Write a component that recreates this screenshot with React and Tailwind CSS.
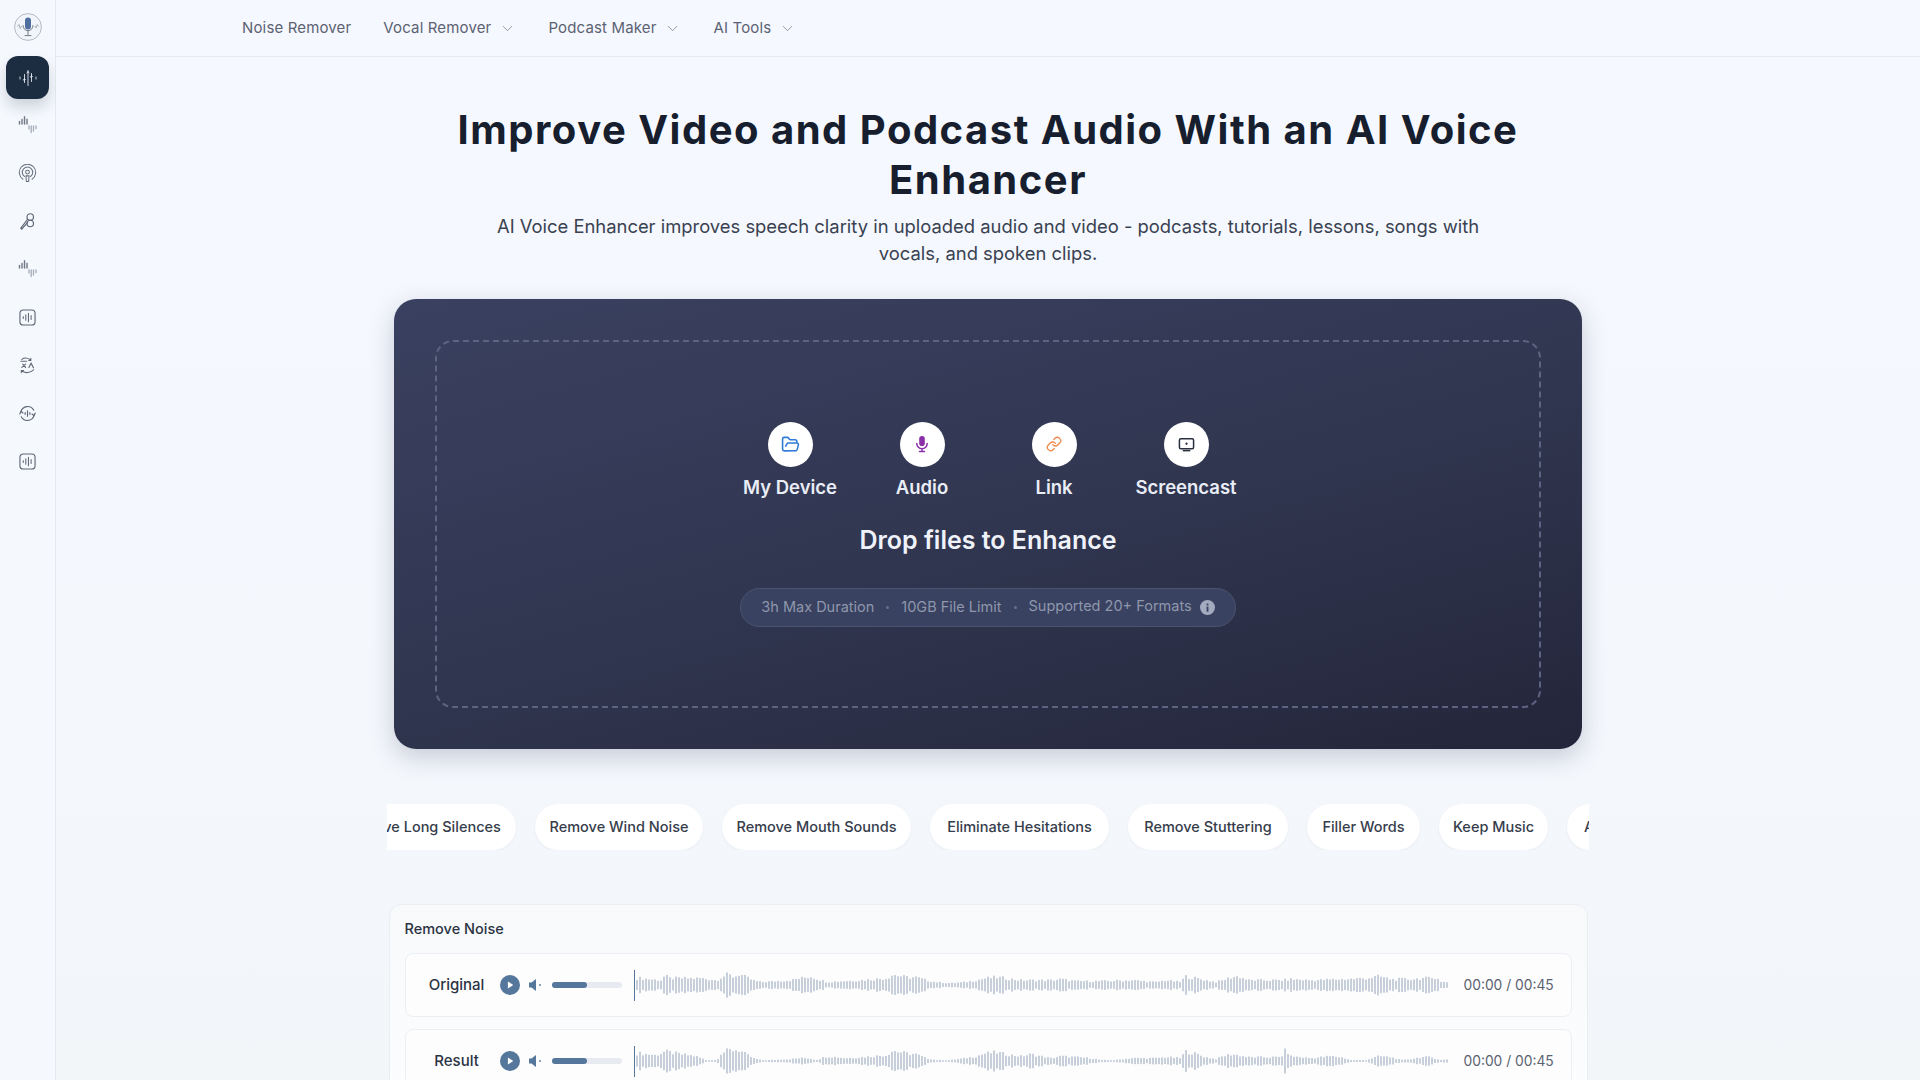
import React from "react";
import { ChevronDown, FolderOpen, Link } from "lucide-react";

const navItems = [
  { label: "Noise Remover", menu: false },
  { label: "Vocal Remover", menu: true },
  { label: "Podcast Maker", menu: true },
  { label: "AI Tools", menu: true },
];

const chips = [
  { label: "Remove Long Silences", width: "w-[187px]" },
  { label: "Remove Wind Noise", width: "w-[168px]" },
  { label: "Remove Mouth Sounds", width: "w-[189px]" },
  { label: "Eliminate Hesitations", width: "w-[179px]" },
  { label: "Remove Stuttering", width: "w-[160px]" },
  { label: "Filler Words", width: "w-[113px]" },
  { label: "Keep Music", width: "w-[109px]" },
  { label: "Auto Level", width: "w-[107px]" },
];

// envelope of the two waveforms: [x on the page, half height]
const originalEnv = [
  [620, 8], [640, 7], [660, 5], [664, 10], [668, 7], [700, 7], [716, 5], [720, 8], [727, 11], [734, 8], [737, 12],
  [745, 8], [752, 5], [760, 3], [790, 5], [800, 7], [810, 9], [815, 7], [826, 3], [840, 4], [860, 5], [885, 7],
  [892, 11], [905, 8], [915, 8], [925, 5], [935, 3], [950, 2], [965, 3], [975, 5], [985, 7], [995, 8], [1005, 7],
  [1020, 5], [1050, 5], [1060, 6], [1075, 4], [1100, 4], [1130, 5], [1155, 3], [1165, 5], [1180, 3], [1184, 9],
  [1190, 8], [1205, 5], [1215, 3], [1222, 5], [1230, 8], [1238, 9], [1247, 5], [1280, 5], [1290, 6], [1310, 5],
  [1340, 6], [1365, 7], [1378, 9], [1390, 6], [1410, 6], [1420, 7], [1430, 7], [1436, 9], [1440, 3], [1448, 3],
];

const resultEnv = [
  [620, 7], [640, 8], [655, 6], [664, 10], [680, 7], [695, 5], [705, 1], [716, 1], [720, 8], [727, 11], [737, 12],
  [745, 7], [752, 3], [760, 1], [770, 1], [790, 2], [800, 3], [808, 3], [815, 1], [826, 5], [845, 3], [860, 4],
  [885, 6], [892, 11], [905, 8], [915, 7], [925, 3], [935, 1], [950, 1], [965, 3], [975, 5], [985, 8], [995, 9],
  [1005, 7], [1020, 5], [1030, 7], [1040, 5], [1050, 3], [1060, 5], [1075, 4], [1090, 3], [1100, 1], [1115, 1],
  [1130, 3], [1155, 3], [1165, 4], [1180, 3], [1184, 10], [1190, 9], [1205, 4], [1215, 2], [1222, 5], [1230, 7],
  [1238, 6], [1247, 4], [1280, 4], [1285, 12], [1290, 5], [1310, 3], [1330, 5], [1340, 4], [1350, 1], [1365, 1],
  [1378, 5], [1390, 4], [1400, 1], [1410, 2], [1420, 4], [1430, 4], [1440, 1], [1448, 2],
];

const envelopeAt = (env, x) => {
  for (let i = 1; i < env.length; i++) {
    if (x <= env[i][0]) {
      const [x0, h0] = env[i - 1];
      const [x1, h1] = env[i];
      return h0 + ((h1 - h0) * (x - x0)) / (x1 - x0);
    }
  }
  return env[env.length - 1][1];
};

const jitter = (i) => {
  const v = Math.sin(i * 12.9898) * 43758.5453;
  return v - Math.floor(v);
};

const Waveform = ({ env }) => {
  const bars = [];
  for (let i = 0; i < 271; i++) {
    const x = 636 + i * 3;
    const h = Math.max(0.6, envelopeAt(env, x) * (0.7 + 0.5 * jitter(i)));
    bars.push(<rect key={i} x={i * 3 + 1} y={22 - h} width="1.5" height={h * 2} fill="#b5c0ce" />);
  }
  return (
    <svg viewBox="0 0 812 44" className="flex-1 h-[44px] min-w-0">
      {bars}
    </svg>
  );
};

const AudioRow = ({ label, env }) => (
  <div className="h-[64px] flex items-center bg-[#fdfdfe] border border-[#eceff3] rounded-lg shrink-0">
    <span className="w-[94px] pl-[8px] text-center text-[15px] font-medium text-[#2b3342]">{label}</span>
    <svg viewBox="0 0 19 19" className="w-[20px] h-[20px] shrink-0">
      <circle cx="9.5" cy="9.5" r="9.5" fill="#55779c" />
      <path d="M7.5 6.2 L12.6 9.5 L7.5 12.8 Z" fill="#fff" />
    </svg>
    <svg viewBox="0 0 16 16" className="w-[16px] h-[16px] ml-[8px] shrink-0">
      <path d="M1 5.5 H3.5 L8 2 V14 L3.5 10.5 H1 Z" fill="#55779c" />
      <circle cx="12" cy="8" r="0.9" fill="#55779c" />
    </svg>
    <div className="w-[70px] h-[6px] ml-[8px] rounded-full bg-[#e7ebf1] shrink-0">
      <div className="w-[35px] h-full rounded-full bg-[#55779c]" />
    </div>
    <div className="w-[1.5px] h-[31px] ml-[12px] bg-[#55779c] shrink-0" />
    <Waveform env={env} />
    <span className="w-[89px] ml-[16px] mr-[18px] shrink-0 text-[13.8px] text-[#5b6270] whitespace-nowrap text-right">
      00:00 / 00:45
    </span>
  </div>
);

const WaveBars = () => (
  <svg viewBox="0 0 20 18" className="w-[20px] h-[18px]" fill="none" strokeLinecap="round" strokeWidth="1.4">
    <path d="M1.5 5.5v2.5M4 3.5v4.5M6.5 .8v7.2M9 3.2v4.8" stroke="#6f7684" />
    <path d="M11 10v3M13.2 10v6.5M15.5 10v5M18 10v2.5" stroke="#aab1bc" />
  </svg>
);

const SquareBars = () => (
  <svg viewBox="0 0 18 18" className="w-[17px] h-[17px]" fill="none" stroke="#5f6775" strokeLinecap="round">
    <rect x="1" y="1" width="16" height="16" rx="3.5" strokeWidth="1.2" />
    <path d="M4.5 8v2M7.2 6v6M10 4.5v9M12.8 7v4" strokeWidth="1.1" />
  </svg>
);

const sideIcons = [
  <WaveBars />,
  <svg viewBox="0 0 20 20" className="w-[19px] h-[19px]" fill="none" stroke="#6a7280" strokeWidth="1.1" strokeLinecap="round">
    <path d="M5.2 16A8.6 8.6 0 1 1 14.8 16" />
    <path d="M6.8 13.2A5.5 5.5 0 1 1 13.2 13.2" />
    <circle cx="10" cy="8.5" r="2" />
    <path d="M8.4 12.5h3.2l-.4 6H8.8z" />
  </svg>,
  <svg viewBox="0 0 20 20" className="w-[18px] h-[19px]" fill="none" stroke="#5f6775" strokeWidth="1.3" strokeLinecap="round">
    <circle cx="12.5" cy="5" r="3.6" />
    <circle cx="12.5" cy="12.2" r="3.6" />
    <path d="M9.5 7.5L2 17.5l1 1L9.6 11" />
  </svg>,
  <WaveBars />,
  <SquareBars />,
  <svg viewBox="0 0 18 18" className="w-[17px] h-[17px]" fill="none" stroke="#5f6775" strokeWidth="1.2" strokeLinecap="round">
    <path d="M2 4.5H8M4 7.5L7 11M7 7.5L3 11" />
    <path d="M3 2.5C6 .5 10 1 12.5 3.5M12.5 1.5v2.2h-2.2" />
    <path d="M10.5 11l2.3-4.5 2.5 5" />
    <path d="M15.5 13.5C12.5 17 6 17.5 2.5 14.5M2.5 16.5v-2.2h2.2" />
  </svg>,
  <svg viewBox="0 0 18 18" className="w-[17px] h-[17px]" fill="none" stroke="#5f6775" strokeWidth="1.2" strokeLinecap="round">
    <path d="M2 7A7.4 7.4 0 0 1 15.6 5.5M16 11A7.4 7.4 0 0 1 2.4 12.5" />
    <path d="M.8 9.5L2.2 6.8l2 1.6M17.2 8.5l-1.4 2.7-2-1.6" />
    <path d="M6.5 8v2M9 6.2v5.6M11.5 8v2" />
  </svg>,
  <SquareBars />,
];

const Sidebar = () => (
  <aside className="w-[56px] shrink-0 h-full flex flex-col items-center bg-[#f5f8fd] border-r border-[#e6eaf0]">
    <svg viewBox="0 0 28 28" className="w-[28px] h-[28px] mt-[13px] shrink-0">
      <circle cx="14" cy="14" r="13.4" fill="#f1f4f8" stroke="#a4abb6" strokeWidth="0.8" />
      <rect x="11" y="4.5" width="6" height="12" rx="3" fill="#4f6f9f" />
      <path d="M9 12.5c0 7 10 7 10 0M14 18v4M11 22.6h6" fill="none" stroke="#737b88" strokeWidth="1" strokeLinecap="round" />
      <path d="M3.5 13.5l1.5-2 1.2 4 1.2-2.5M20.8 13l1.2 2 1.2-3.5 1.3 2" fill="none" stroke="#8d949f" strokeWidth="0.7" />
    </svg>
    <div className="w-[43px] h-[43px] mt-[15px] shrink-0 rounded-xl bg-[#1d2d41] flex items-center justify-center shadow-[0_8px_14px_rgba(29,45,65,0.18)]">
      <svg viewBox="0 0 20 20" className="w-[20px] h-[20px]" fill="none" stroke="#dfe5ee" strokeWidth="0.9" strokeLinecap="round">
        <path d="M2 9v2M18 9v2" />
        <path d="M6.5 6.5v8M10 2.5v15M13.5 5.5v8" />
        <path d="M5.7 11.5l.8-1 .8 1-.8 1zM12.7 8.5l.8-1 .8 1-.8 1z" fill="#dfe5ee" />
        <path d="M9 5l1-1.6L11 5" />
      </svg>
    </div>
    <div className="flex flex-col items-center">
      {sideIcons.map((icon, i) => (
        <div key={i} className={`w-[24px] flex items-center justify-center ${i === 0 ? "h-[24px] mt-[14px]" : "h-[24px] mt-[24px]"}`}>
          {icon}
        </div>
      ))}
    </div>
  </aside>
);

const Header = () => (
  <header className="h-[57px] shrink-0 flex items-center pl-[186px] gap-[32px] border-b border-[#e6eaf0] bg-[#f5f8fe]">
    {navItems.map((item) => (
      <div key={item.label} className="flex items-center gap-[8px] text-[15px] tracking-[0.15px] text-[#5c6273]">
        <span>{item.label}</span>
        {item.menu && <ChevronDown size={17} strokeWidth={1.1} className="text-[#767c8b]" />}
      </div>
    ))}
  </header>
);

const sources = [
  { label: "My Device", icon: <FolderOpen size={19} className="text-[#2f7bd8]" strokeWidth={2} /> },
  {
    label: "Audio",
    icon: (
      <svg viewBox="0 0 18 18" className="w-[18px] h-[18px]" fill="none" stroke="#8b2fa8" strokeWidth="1.5" strokeLinecap="round">
        <rect x="6.2" y="1" width="5.6" height="10" rx="2.8" fill="#8b2fa8" stroke="none" />
        <path d="M3.8 8.5a5.2 5.2 0 0 0 10.4 0M9 13.8v2.7M6.5 16.6h5" />
      </svg>
    ),
  },
  { label: "Link", icon: <Link size={16} className="text-[#ef8a4c]" strokeWidth={2} /> },
  {
    label: "Screencast",
    icon: (
      <svg viewBox="0 0 18 18" className="w-[17px] h-[17px]" fill="none" stroke="#2a3040" strokeWidth="1.6">
        <rect x="1.5" y="3" width="15" height="10.5" rx="1.5" />
        <path d="M5 15.5h8" />
        <circle cx="9" cy="8.2" r="1.2" fill="#2a3040" stroke="none" />
      </svg>
    ),
  },
];

const UploadCard = () => (
  <section className="w-[1188px] h-[450px] mt-[32px] shrink-0 p-[41px] rounded-[22px] bg-[linear-gradient(165deg,#3a4160_0%,#30354f_55%,#23263a_100%)] shadow-[0_8px_24px_rgba(40,50,90,0.22)]">
    <div className="h-full flex flex-col items-center justify-center rounded-[18px] border-2 border-dashed border-[#5c6481]">
      <div className="flex">
        {sources.map((s) => (
          <div key={s.label} className="w-[132px] flex flex-col items-center">
            <div className="w-[45px] h-[45px] rounded-full bg-white flex items-center justify-center">{s.icon}</div>
            <span className="mt-[8px] text-[18.5px] leading-[24px] font-semibold text-[#e9edf6] whitespace-nowrap">{s.label}</span>
          </div>
        ))}
      </div>
      <h2 className="mt-[25px] text-[25px] leading-[32px] font-semibold text-[#eff2f9]">Drop files to Enhance</h2>
      <div className="w-[496px] h-[39px] mt-[32px] flex items-center justify-center rounded-full border border-[#4a536f] bg-[#394260] text-[14.5px] text-[#8f97ad]">
        <span>3h Max Duration</span>
        <span className="mx-[12px] w-[3px] h-[3px] rounded-full bg-[#667089]" />
        <span>10GB File Limit</span>
        <span className="mx-[12px] w-[3px] h-[3px] rounded-full bg-[#667089]" />
        <span className="-mt-[2px]">Supported 20+ Formats</span>
        <svg viewBox="0 0 16 16" className="w-[15px] h-[15px] ml-[8px]">
          <circle cx="8" cy="8" r="8" fill="#a3abbf" />
          <rect x="7" y="7" width="2" height="5.5" fill="#394260" />
          <rect x="7" y="3.8" width="2" height="2" fill="#394260" />
        </svg>
      </div>
    </div>
  </section>
);

export default function App() {
  return (
    <div className="w-full h-screen overflow-hidden flex bg-[#f5f8fe] font-['Inter','Liberation_Sans',sans-serif]">
      <Sidebar />
      <div className="flex-1 min-w-0 h-full flex flex-col">
        <Header />
        <main className="flex-1 min-h-0 overflow-hidden flex flex-col items-center pt-[48px] bg-[linear-gradient(180deg,#f5f8fe_0%,#f4f7fc_55%,#f3f6f9_100%)]">
          <h1 className="w-[1188px] text-center text-[40px] leading-[50px] tracking-[1.5px] font-bold text-[#171e2e]">
            Improve Video and Podcast Audio With an AI Voice Enhancer
          </h1>
          <p className="w-[1000px] mt-[8px] text-center text-[18.4px] leading-[27px] text-[#3a4252]">
            AI Voice Enhancer improves speech clarity in uploaded audio and video - podcasts, tutorials, lessons, songs with vocals, and spoken clips.
          </p>
          <UploadCard />
          <div className="w-[1202px] mt-[55px] shrink-0 overflow-hidden">
            <div className="flex gap-[19px] -ml-[58px]">
              {chips.map((chip) => (
                <div
                  key={chip.label}
                  className={`${chip.width} h-[46px] shrink-0 flex items-center justify-center rounded-full bg-white text-[14.5px] font-medium text-[#363d4b] whitespace-nowrap shadow-[0_1px_3px_rgba(40,50,80,0.05)]`}
                >
                  {chip.label}
                </div>
              ))}
            </div>
          </div>
          <section className="w-[1199px] mt-[54px] shrink-0 flex flex-col px-[15px] pt-[13px] rounded-t-xl border border-[#eaeef2] bg-[linear-gradient(180deg,#f8f9fb,#fcfdfe)]">
            <h3 className="text-[14.5px] leading-[22px] font-medium text-[#2b3342]">Remove Noise</h3>
            <div className="mt-[13px] flex flex-col gap-[12px]">
              <AudioRow label="Original" env={originalEnv} />
              <AudioRow label="Result" env={resultEnv} />
            </div>
          </section>
        </main>
      </div>
    </div>
  );
}
